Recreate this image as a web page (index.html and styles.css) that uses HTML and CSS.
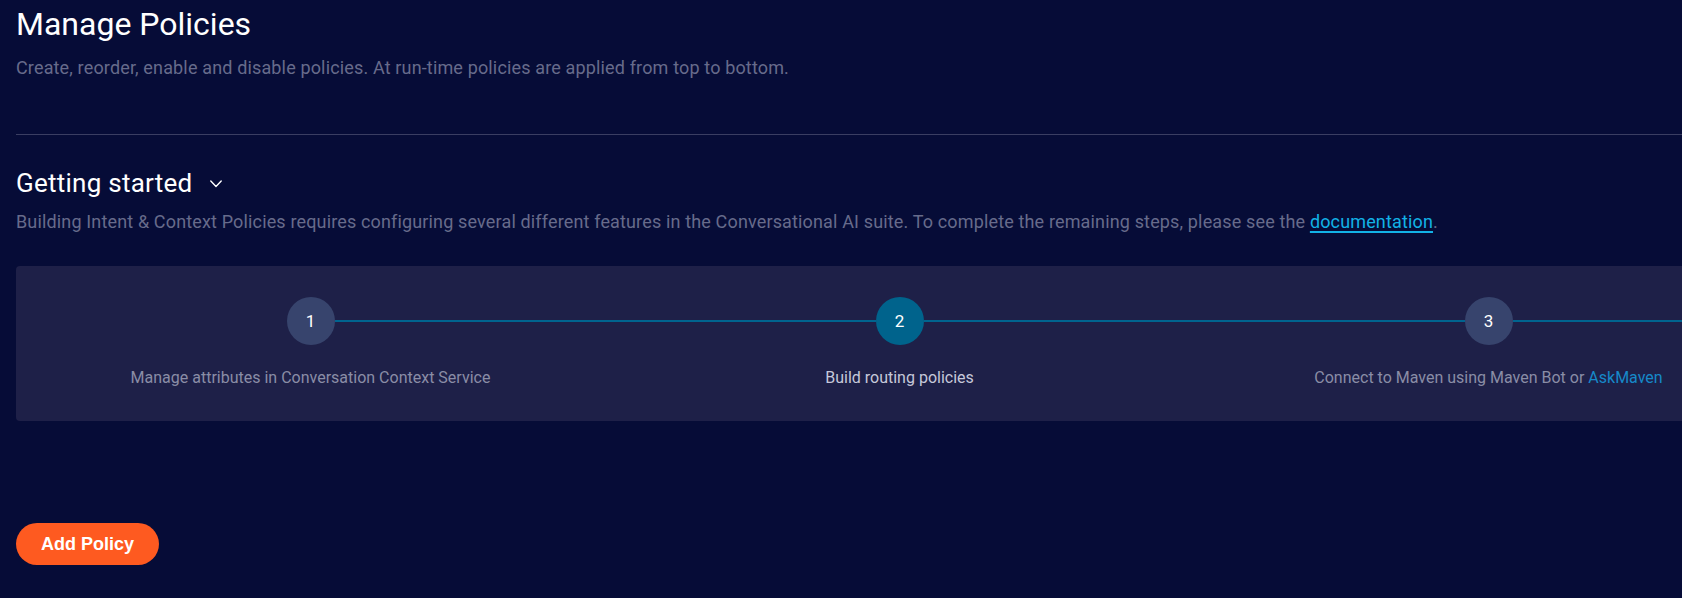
FILE: index.html
```html
<!DOCTYPE html>
<html lang="en">
<head>
<meta charset="utf-8">
<title>Manage Policies</title>
<link rel="stylesheet" href="styles.css">
</head>
<body>
<main class="page">
  <header class="page-header">
    <h1 class="page-title">Manage Policies</h1>
    <p class="page-subtitle">Create, reorder, enable and disable policies. At run-time policies are applied from top to bottom.</p>
  </header>
  <hr class="divider">
  <section class="getting-started">
    <div class="gs-head">
      <h2 class="gs-title">Getting started</h2>
      <svg class="chevron" width="12" height="8" viewBox="0 0 12 8" aria-hidden="true"><path d="M0.8 1 L6 6.4 L11.2 1" fill="none" stroke="#ffffff" stroke-width="1.4" stroke-linecap="round" stroke-linejoin="round"/></svg>
    </div>
    <p class="gs-desc">Building Intent &amp; Context Policies requires configuring several different features in the Conversational AI suite. To complete the remaining steps, please see the <a class="doc-link" href="#">documentation</a>.</p>
    <div class="stepper-card">
      <ol class="stepper">
        <li class="step">
          <div class="step-track"><span class="step-line step-line-right"></span><span class="step-circle">1</span></div>
          <div class="step-label">Manage attributes in Conversation Context Service</div>
        </li>
        <li class="step step-active">
          <div class="step-track"><span class="step-line step-line-left"></span><span class="step-line step-line-right"></span><span class="step-circle">2</span></div>
          <div class="step-label">Build routing policies</div>
        </li>
        <li class="step">
          <div class="step-track"><span class="step-line step-line-left"></span><span class="step-line step-line-right"></span><span class="step-circle">3</span></div>
          <div class="step-label">Connect to Maven using Maven Bot or <a class="step-link" href="#">AskMaven</a></div>
        </li>
      </ol>
    </div>
  </section>
  <div class="actions">
    <button class="btn-add" type="button">Add Policy</button>
  </div>
</main>
</body>
</html>
```

FILE: styles.css
```css
html, body {
  margin: 0;
  padding: 0;
  background: #060c37;
  overflow: hidden;
}

body {
  font-family: Roboto, "Liberation Sans", Arial, sans-serif;
  color: #ffffff;
}

.page {
  width: 1767px;
  padding: 5px 0 0 16px;
  display: flex;
  flex-direction: column;
}

.page-header {
  display: flex;
  flex-direction: column;
}

.page-title {
  margin: 0;
  font-size: 32px;
  line-height: 38px;
  font-weight: 400;
  color: #ffffff;
}

.page-subtitle {
  margin: 13px 0 0;
  font-size: 18px;
  line-height: 24px;
  font-weight: 400;
  letter-spacing: 0.15px;
  color: #676b8b;
}

.divider {
  margin: 54px 0 0;
  border: 0;
  height: 1px;
  background: #3a3e62;
}

.getting-started {
  display: flex;
  flex-direction: column;
  margin-top: 32px;
}

.gs-head {
  display: flex;
  align-items: center;
  gap: 18px;
}

.gs-title {
  margin: 0;
  font-size: 26px;
  line-height: 32px;
  font-weight: 400;
  letter-spacing: 0.25px;
  color: #ffffff;
}

.chevron {
  display: block;
  margin-top: 1px;
}

.gs-desc {
  margin: 11px 0 0;
  font-size: 18px;
  line-height: 24px;
  font-weight: 400;
  letter-spacing: 0.15px;
  color: #676b8b;
}

.doc-link {
  color: #12b2e6;
  text-decoration: underline;
  text-decoration-thickness: 2px;
  text-underline-offset: 3px;
}

.stepper-card {
  margin-top: 32px;
  background: #1e2048;
  border-radius: 4px;
  padding: 31px 0 31px;
}

.stepper {
  list-style: none;
  margin: 0;
  padding: 0;
  display: grid;
  grid-template-columns: repeat(3, 589px);
}

.step {
  display: flex;
  flex-direction: column;
  align-items: center;
}

.step-track {
  position: relative;
  width: 100%;
  height: 48px;
  display: flex;
  justify-content: center;
}

.step-line {
  position: absolute;
  top: 24px;
  height: 2px;
  margin-top: -1px;
  background: #00648f;
}

.step-line-left {
  left: 0;
  right: calc(50% + 24px);
}

.step-line-right {
  left: calc(50% + 24px);
  right: 0;
}

.step-circle {
  width: 48px;
  height: 48px;
  border-radius: 50%;
  background: #37446d;
  color: #ffffff;
  font-size: 17px;
  line-height: 48px;
  text-align: center;
}

.step-active .step-circle {
  background: #00638c;
}

.step-label {
  margin-top: 21px;
  font-size: 16px;
  line-height: 24px;
  color: #8a8da6;
  text-align: center;
}

.step-active .step-label {
  color: #c6c8da;
}

.step-link {
  color: #1689c9;
  text-decoration: none;
}

.actions {
  display: flex;
  margin-top: 102px;
}

.btn-add {
  height: 42px;
  padding: 0 25px;
  border: 0;
  border-radius: 21px;
  background: #fe5a20;
  color: #ffffff;
  font-family: "Liberation Sans", Arial, sans-serif;
  font-weight: 700;
  font-size: 18px;
  line-height: 42px;
  cursor: pointer;
}
```
